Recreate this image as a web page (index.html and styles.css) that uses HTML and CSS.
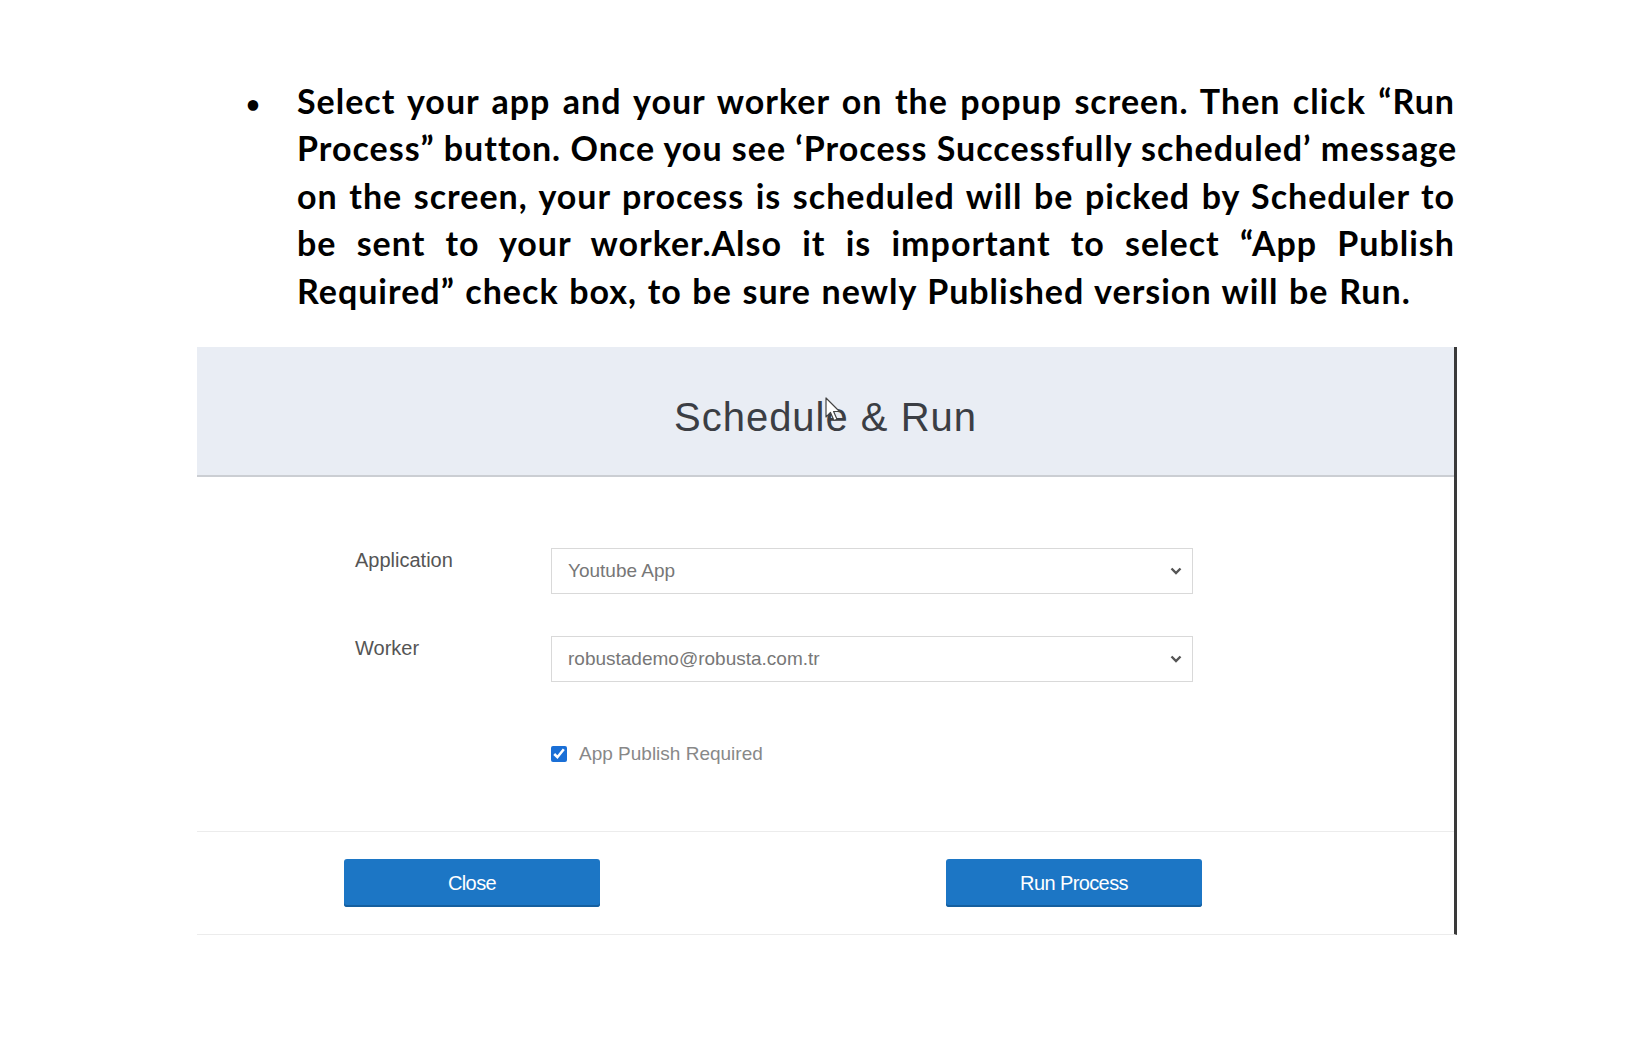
FILE: index.html
```html
<!DOCTYPE html>
<html lang="en">
<head>
<meta charset="utf-8">
<title>Schedule &amp; Run</title>
<link rel="stylesheet" href="styles.css">
</head>
<body>
<div class="page">
  <div class="note">
    <span class="bullet">•</span>
    <p class="para">
      <span class="ln">Select your app and your worker on the popup screen. Then click “Run</span>
      <span class="ln">Process” button. Once you see ‘Process Successfully scheduled’ message</span>
      <span class="ln">on the screen, your process is scheduled will be picked by Scheduler to</span>
      <span class="ln">be sent to your worker.Also it is important to select “App Publish</span>
      <span class="ln ln-last">Required” check box, to be sure newly Published version will be Run.</span>
    </p>
  </div>

  <div class="dialog">
    <div class="dlg-header">
      <h1 class="dlg-title">Schedule &amp; Run</h1>
      <svg class="cursor" width="16" height="26" viewBox="0 0 16 26">
        <path d="M1 1 L1 20 L5.5 15.5 L9 23.5 L12 22.2 L8.6 14.5 L14.5 14.5 Z" fill="#fff" stroke="#444" stroke-width="1.2" stroke-linejoin="round"/>
      </svg>
    </div>
    <div class="dlg-body">
      <div class="form-row">
        <label class="form-label">Application</label>
        <div class="select">
          <span class="select-value">Youtube App</span>
          <svg class="chev" width="12" height="8" viewBox="0 0 12 8"><path d="M1.5 1.5 L6 6 L10.5 1.5" fill="none" stroke="#555" stroke-width="2.4"/></svg>
        </div>
      </div>
      <div class="form-row">
        <label class="form-label">Worker</label>
        <div class="select">
          <span class="select-value">robustademo@robusta.com.tr</span>
          <svg class="chev" width="12" height="8" viewBox="0 0 12 8"><path d="M1.5 1.5 L6 6 L10.5 1.5" fill="none" stroke="#555" stroke-width="2.4"/></svg>
        </div>
      </div>
      <div class="check-row">
        <label class="check">
          <input type="checkbox" class="check-input" checked>
          <span class="check-text">App Publish Required</span>
        </label>
      </div>
    </div>
    <div class="dlg-footer">
      <button class="btn">Close</button>
      <button class="btn">Run Process</button>
    </div>
  </div>
</div>
</body>
</html>
```

FILE: styles.css
```css
* { box-sizing: border-box; }

html, body {
  margin: 0;
  padding: 0;
  background: #ffffff;
}

.page {
  padding-top: 77px;
  width: 1651px;
}

.note {
  display: flex;
  align-items: flex-start;
  margin-left: 246px;
}

.bullet {
  width: 51px;
  flex: none;
  font-family: Lato, "Liberation Sans", sans-serif;
  font-weight: 700;
  font-size: 24px;
  line-height: 54px;
  color: #000;
}

.para {
  margin: 0;
  width: 1158px;
  font-family: Lato, "Open Sans", sans-serif;
  font-weight: 700;
  font-size: 34px;
  letter-spacing: 1px;
  line-height: 47.4px;
  color: #000;
}

.ln {
  display: block;
  text-align: justify;
  text-align-last: justify;
  white-space: nowrap;
}

.ln-last {
  text-align-last: left;
  word-spacing: 1.4px;
}

.dialog {
  margin-top: 33px;
  margin-left: 197px;
  width: 1260px;
  border-right: 3px solid #3a3a3a;
  border-bottom: 1px solid #ececec;
  font-family: "Liberation Sans", Arial, sans-serif;
}

.dlg-header {
  position: relative;
  height: 130px;
  background: #e9edf4;
  border-bottom: 2px solid #cbced3;
  display: flex;
  align-items: center;
  justify-content: center;
  padding-top: 13px;
}

.dlg-title {
  margin: 0;
  font-weight: 400;
  font-size: 40px;
  letter-spacing: 1px;
  color: #3b3e44;
}

.cursor {
  position: absolute;
  left: 628px;
  top: 50px;
}

.dlg-body {
  padding: 71px 0 66px 158px;
}

.form-row {
  display: grid;
  grid-template-columns: 196px 642px;
  align-items: start;
  margin-bottom: 42px;
}

.form-label {
  font-size: 20px;
  line-height: 23px;
  color: #555;
  padding-top: 1px;
}

.select {
  height: 46px;
  border: 1px solid #d9d9d9;
  display: flex;
  align-items: center;
  justify-content: space-between;
  padding: 0 10px 0 16px;
  background: #fff;
}

.select-value {
  font-size: 19px;
  color: #777;
}

.chev {
  flex: none;
}

.check-row {
  margin-top: 61px;
  padding-left: 196px;
}

.check {
  display: flex;
  align-items: center;
  gap: 12px;
  height: 22px;
}

.check-input {
  margin: 0;
  width: 16px;
  height: 16px;
  accent-color: #1a6fd6;
}

.check-text {
  font-size: 19px;
  color: #888;
}

.dlg-footer {
  border-top: 1px solid #ececec;
  padding: 27px 0 27px 147px;
  display: flex;
  gap: 346px;
}

.btn {
  width: 256px;
  height: 48px;
  border: none;
  border-radius: 3px;
  background: #1c76c5;
  box-shadow: inset 0 -2px 0 #155f9f;
  color: #fff;
  font-family: "Liberation Sans", Arial, sans-serif;
  font-size: 20px;
  letter-spacing: -0.6px;
  padding: 0;
}
```
